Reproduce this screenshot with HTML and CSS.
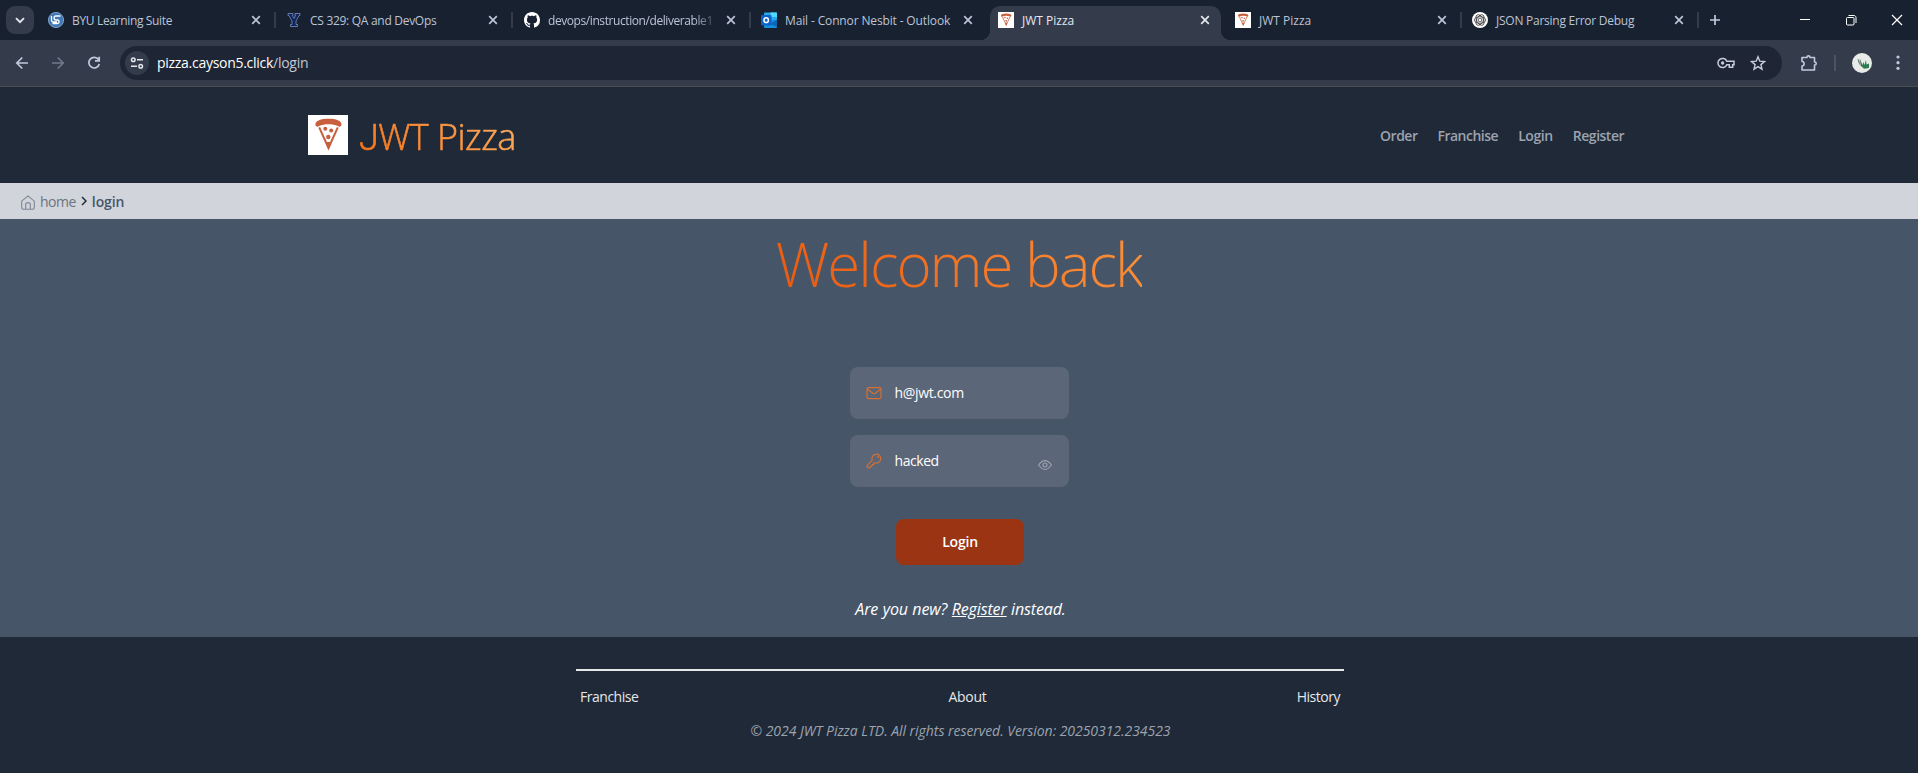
FILE: index.html
```html
<!DOCTYPE html>
<html lang="en">
<head>
<meta charset="utf-8">
<title>JWT Pizza</title>
<link rel="stylesheet" href="styles.css">
</head>
<body>
<svg class="defs" width="0" height="0">
  <symbol id="x" viewBox="0 0 10 10"><path d="M1.2 1.2l7.6 7.6M8.8 1.2L1.2 8.8" fill="none" stroke="currentColor" stroke-width="1.7"/></symbol>
  <symbol id="pizza" viewBox="0 0 40 40"><rect width="40" height="40" fill="#fff"/><path d="M7.4 9.6C7.2 5.600 13 3.700 20.500 3.700S33.700 5.600 33.500 9.600c-.1 2.300-2.200 2.500-3.600 1.500-5-2.600-13.800-2.600-18.900 0-1.500 1-3.500.8-3.600-1.500z" fill="#c8603f"/><path d="M11.200 12.300L20.500 33l9.300-20.700" fill="none" stroke="#c8603f" stroke-width="2"/><path d="M17.500 27h6l-3 8z" fill="#c8603f"/><circle cx="17.300" cy="13.800" r="2" fill="#c8603f"/><circle cx="23.200" cy="15.600" r="2" fill="#c8603f"/><circle cx="20.300" cy="22" r="2.200" fill="#c8603f"/></symbol>
</svg>

<div class="tabstrip">
  <div class="tab-search"><svg width="10" height="7" viewBox="0 0 10 7"><path d="M1 1.200l4 4 4-4" fill="none" stroke="#e3e6ee" stroke-width="1.900"/></svg></div>
  <div class="tab wide">
    <svg class="fav" viewBox="0 0 16 16"><circle cx="8" cy="8" r="7.600" fill="#3f78b5" stroke="#8fb9e0" stroke-width=".8"/><path d="M12.500 4H7.800C5.500 4 5.500 8 7.800 8h1.500c2.500 0 2.500 3.500 0 3.500H4.500M3.500 4v4.500c0 1 .4 1.500 1.500 1.500h4" fill="none" stroke="#fff" stroke-width="1.300"/></svg>
    <span class="label t1">BYU Learning Suite</span><svg class="close"><use href="#x"/></svg><i class="sep"></i>
  </div>
  <div class="tab wide">
    <svg class="fav" viewBox="0 0 16 16"><path d="M2 1.500h5v2H6.300L8 6.500l1.700-3H9v-2h5v2h-1L10 9v3.500h1.500v2h-7v-2H6V9L3 3.500H2z" fill="#0b2560" stroke="#7e8db5" stroke-width=".8"/></svg>
    <span class="label t2">CS 329: QA and DevOps</span><svg class="close"><use href="#x"/></svg><i class="sep"></i>
  </div>
  <div class="tab">
    <svg class="fav" viewBox="0 0 16 16"><path fill="#fff" d="M8 0C3.580 0 0 3.580 0 8c0 3.540 2.290 6.530 5.470 7.590.4.070.55-.17.55-.38 0-.19-.01-.82-.01-1.490-2.010.37-2.530-.49-2.690-.94-.09-.23-.48-.94-.82-1.130-.28-.15-.68-.52-.01-.53.63-.01 1.080.58 1.230.82.72 1.210 1.870.87 2.330.66.070-.52.28-.87.51-1.070-1.780-.2-3.640-.89-3.640-3.950 0-.87.31-1.590.82-2.150-.08-.2-.36-1.020.08-2.120 0 0 .67-.21 2.200.82.640-.18 1.320-.27 2-.27s1.360.09 2 .27c1.530-1.040 2.200-.82 2.200-.82.44 1.100.16 1.920.08 2.120.51.56.82 1.270.82 2.150 0 3.070-1.870 3.750-3.650 3.950.29.25.54.73.54 1.480 0 1.070-.01 1.930-.01 2.200 0 .21.15.46.55.38A8.010 8.010 0 0016 8c0-4.420-3.580-8-8-8z"/></svg>
    <span class="label t3">devops/instruction/deliverable1</span><svg class="close"><use href="#x"/></svg><i class="sep"></i>
  </div>
  <div class="tab">
    <svg class="fav" viewBox="0 0 16 16"><path d="M3 1.500C3 1 3.400.5 4 .5h11c.5 0 1 .4 1 1V9H3z" fill="#28a8ea"/><path d="M9.500.5H15c.5 0 1 .4 1 1V5H9.500z" fill="#50d9ff"/><path d="M3 8h13v7c0 .5-.4 1-1 1H4c-.6 0-1-.5-1-1z" fill="#1490df"/><path d="M9 12l7-4.500V15z" fill="#1066b5"/><rect y="3" width="10.500" height="10.500" rx="1" fill="#0a63c9"/><ellipse cx="5.200" cy="8.200" rx="2.200" ry="2.400" fill="none" stroke="#fff" stroke-width="1.500"/></svg>
    <span class="label t4">Mail - Connor Nesbit - Outlook</span><svg class="close"><use href="#x"/></svg>
  </div>
  <div class="tab active">
    <svg class="fav"><use href="#pizza"/></svg>
    <span class="label t5">JWT Pizza</span><svg class="close"><use href="#x"/></svg>
  </div>
  <div class="tab">
    <svg class="fav"><use href="#pizza"/></svg>
    <span class="label t5">JWT Pizza</span><svg class="close"><use href="#x"/></svg><i class="sep"></i>
  </div>
  <div class="tab">
    <svg class="fav" viewBox="0 0 16 16"><circle cx="8" cy="8" r="8" fill="#fff"/><g fill="none" stroke="#222" stroke-width=".7"><ellipse cx="8" cy="8" rx="5.800" ry="3.300"/><ellipse cx="8" cy="8" rx="5.800" ry="3.300" transform="rotate(60 8 8)"/><ellipse cx="8" cy="8" rx="5.800" ry="3.300" transform="rotate(120 8 8)"/><circle cx="8" cy="8" r="1.800"/></g></svg>
    <span class="label t6">JSON Parsing Error Debug</span><svg class="close"><use href="#x"/></svg><i class="sep"></i>
  </div>
  <svg class="plus" width="12" height="12" viewBox="0 0 12 12"><path d="M6 1v10M1 6h10" stroke="#c3c9dc" stroke-width="1.700"/></svg>
  <div class="window-controls">
    <svg width="12" height="12" viewBox="0 0 12 12"><path d="M1 5.500h10" stroke="#fff"/></svg>
    <svg width="12" height="12" viewBox="0 0 12 12"><g fill="none" stroke="#fff"><rect x="1.500" y="3.500" width="7.500" height="7.500" rx="1"/><path d="M3.500 1.500H9c1 0 2 1 2 2V9"/></g></svg>
    <svg width="12" height="12" viewBox="0 0 12 12"><path d="M1 1l10 10M11 1L1 11" stroke="#fff" stroke-width="1.200"/></svg>
  </div>
</div>

<div class="toolbar">
  <div class="nav-icons">
    <svg width="14" height="14" viewBox="0 0 14 14"><path d="M13 7H2M7.300 1.500L1.800 7l5.500 5.500" fill="none" stroke="#c3c9dc" stroke-width="1.700"/></svg>
    <svg width="14" height="14" viewBox="0 0 14 14"><path d="M1 7h11M6.700 1.500L12.200 7l-5.500 5.500" fill="none" stroke="#717889" stroke-width="1.700"/></svg>
    <svg width="14" height="14" viewBox="0 0 14 14"><path d="M11.500 3.600A5.300 5.300 0 1 0 12.300 8M12.200.8v4H8" fill="none" stroke="#c3c9dc" stroke-width="1.700"/></svg>
  </div>
  <div class="omnibox">
    <div class="site-info"><svg width="14" height="12" viewBox="0 0 14 12"><g fill="none" stroke="#e3e6ee" stroke-width="1.500"><circle cx="3.300" cy="2.700" r="1.800"/><path d="M7 2.700h6M1 9.300h6"/><circle cx="10.700" cy="9.300" r="1.800"/></g></svg></div>
    <span class="url"><b>pizza.cayson5.click</b>/login</span>
    <svg class="key" width="18" height="12" viewBox="0 0 18 12"><path d="M9.800 4.200A4.600 4.600 0 1 0 9.800 7.800h2.500v2.500h3.400V7.800H17V4.200z" fill="none" stroke="#c9ccd6" stroke-width="1.500"/><circle cx="5.600" cy="6" r="1.700" fill="#c9ccd6"/></svg>
    <svg width="16" height="16" viewBox="0 0 16 16"><path d="M8 1.800l1.800 4.400 4.700.4-3.600 3 1.100 4.600L8 11.700l-4 2.500 1.100-4.600-3.600-3 4.700-.4z" fill="none" stroke="#c9ccd6" stroke-width="1.400"/></svg>
  </div>
  <svg class="puzzle" width="18" height="18" viewBox="0 0 18 18"><path d="M2 3.500h5C7 1.300 10 1.300 10 3.500h4.500V8c2.300 0 2.300 3 0 3v5H2v-4c2.800 0 2.800-4.500 0-4.500z" fill="none" stroke="#c3c9dc" stroke-width="1.600" stroke-linejoin="round"/></svg>
  <i class="bar"></i>
  <svg class="avatar" width="20" height="20" viewBox="0 0 20 20"><circle cx="10" cy="10" r="10" fill="#e9ebe8"/><path d="M8.500 9l2 3 .8-3 1.200 3 1.500-5 .5 4.500 2.500-1V15l-5 .8-3-3z" fill="#2c7a52"/><path d="M6 6l1.500 5 3 3M8 6.500l1.500 5M6 8l3.500 2.500" stroke="#4c6c60" stroke-width=".8" fill="none"/></svg>
  <svg class="dots" width="4" height="16" viewBox="0 0 4 16"><g fill="#c3c9dc"><circle cx="2" cy="2" r="1.600"/><circle cx="2" cy="7.700" r="1.600"/><circle cx="2" cy="13.300" r="1.600"/></g></svg>
</div>

<header class="site-header">
  <svg class="logo" width="40" height="40"><use href="#pizza"/></svg>
  <span class="brand"><span class="cap">J</span>WT Pizza</span>
  <nav class="menu"><a class="m1">Order</a><a class="m2">Franchise</a><a class="m3">Login</a><a class="m4">Register</a></nav>
</header>

<div class="crumbs">
  <svg class="house" width="14" height="15" viewBox="0 0 14 15"><path d="M.7 6.200L7 .9l6.300 5.300v6.300c0 1-.7 1.700-1.700 1.700H2.400c-1 0-1.700-.7-1.700-1.700zM4.700 14V9c0-.7.4-1.100 1.100-1.100h2.400c.7 0 1.100.4 1.100 1.100v5" fill="none" stroke="#7f8593" stroke-width="1.100"/></svg>
  <span class="home">home</span>
  <svg class="chev" width="6" height="10" viewBox="0 0 6 10"><path d="M1 1l4 4-4 4" fill="none" stroke="#1f2937" stroke-width="1.500"/></svg>
  <b class="here">login</b>
</div>

<main class="main">
  <h1 class="welcome">Welcome back</h1>
  <div class="field">
    <svg width="16" height="16" viewBox="0 0 16 16"><rect x="1" y="2.600" width="14" height="11" rx="1.500" fill="none" stroke="#d9702f" stroke-width="1.100"/><path d="M1.300 4l5.400 4.200c.8.600 1.800.6 2.600 0L14.700 4" fill="none" stroke="#d9702f" stroke-width="1.100"/></svg>
    <span class="v1">h@jwt.com</span>
  </div>
  <div class="field">
    <svg width="16" height="16" viewBox="0 0 16 16"><path d="M6.300 7.200A4.400 4.400 0 1 1 9 9.700L7.800 10v1.500l-1.600.1-.2 1.600-1.500.2-.8 1.200c-1.300.9-3.300-.5-2.500-2.200zM10.800 3.200c1.200.2 1.900.9 2.100 2" fill="none" stroke="#d9702f" stroke-width="1.100" stroke-linejoin="round"/></svg>
    <span class="v2">hacked</span>
    <svg class="eye" width="14" height="10" viewBox="0 0 14 10"><path d="M.6 5C3 1.700 5 .6 7 .6S11 1.700 13.400 5C11 8.300 9 9.400 7 9.400S3 8.300.6 5z" fill="none" stroke="#9da3ae" stroke-width="1.100"/><circle cx="7" cy="5" r="2" fill="none" stroke="#9da3ae" stroke-width="1.200"/></svg>
  </div>
  <button class="login">Login</button>
  <p class="new">Are you new? <u>Register</u> instead.</p>
</main>

<footer class="footer">
  <div class="links"><a class="f1">Franchise</a><a class="f2">About</a><a class="f3">History</a></div>
  <p class="copy">© 2024 JWT Pizza LTD. All rights reserved. Version: 20250312.234523</p>
</footer>
</body>
</html>
```
FILE: styles.css
```css
* { box-sizing: border-box; }
body { margin: 0; height: 773px; display: flex; flex-direction: column; overflow: hidden; background: #1f2937; font-family: "Open Sans", "Noto Sans", sans-serif; font-size: 14px; }
svg { display: block; flex: none; }
.defs { position: absolute; }

.tabstrip { height: 40px; flex: none; background: #182130; display: flex; align-items: flex-start; padding-left: 6px; }
.tab-search { width: 28px; height: 28px; margin: 6px 6px 0 0; border-radius: 9px; background: #343c4c; display: flex; align-items: center; justify-content: center; }
.tab { position: relative; width: 237px; flex: none; height: 34px; margin-top: 6px; padding-left: 8px; display: flex; align-items: center; padding-bottom: 6px; color: #bcc4d6; font-size: 12px; }
.wide { width: 238px; }
.fav { width: 16px; height: 16px; margin-right: 8px; }
.label { width: 175px; white-space: nowrap; line-height: 20px; padding-top: 1px; }
.t1 { width: 176px; letter-spacing: -.34px; }
.t2 { letter-spacing: -.29px; }
.t3 { width: 168px; margin-right: 7px; letter-spacing: -.42px; -webkit-mask-image: linear-gradient(90deg, #000 145px, transparent 172px); }
.t4 { letter-spacing: -.14px; }
.t6 { letter-spacing: -.25px; }
.close { width: 10px; height: 10px; margin-left: 3px; }
.sep { width: 2px; height: 16px; margin-left: 13px; background: #343c4c; }
.active { width: 231px; margin-right: 6px; background: #343c4c; border-radius: 10px 10px 0 0; color: #e6e8ee; }
.active::before, .active::after { content: ""; position: absolute; bottom: 0; width: 10px; height: 10px; }
.active::before { left: -10px; background: radial-gradient(circle at 0 0, #182130 10px, #343c4c 10.500px); }
.active::after { right: -10px; background: radial-gradient(circle at 100% 0, #182130 10px, #343c4c 10.500px); }
.plus { margin: 14px 0 0 8px; }
.window-controls { margin: 14px 15px 0 auto; display: flex; gap: 34px; }

.toolbar { height: 47px; flex: none; background: #343c4c; border-bottom: 1px solid #4b4c50; display: flex; align-items: center; padding: 0 18px 0 15px; }
.nav-icons { display: flex; gap: 22px; width: 105px; }
.omnibox { width: 1662px; height: 34px; border-radius: 17px; background: #1e2636; display: flex; align-items: center; padding: 0 16px 0 5px; }
.site-info { width: 24px; height: 24px; border-radius: 12px; background: #343c4c; display: flex; align-items: center; justify-content: center; margin-right: 8px; }
.url { flex: 1; color: #c3c8d4; font-size: 14px; letter-spacing: -.28px; padding-bottom: 1px; }
.url b { font-weight: 400; color: #fff; }
.key { margin-right: 15px; }
.puzzle { margin-left: 18px; }
.bar { width: 2px; height: 16px; background: #4b5364; margin-left: 16px; }
.avatar { margin-left: 16px; }
.dots { margin-left: auto; }

.site-header { height: 96px; flex: none; padding: 0 294px 0 308px; display: flex; align-items: center; }
.brand { margin: 5px 0 0 11px; font-size: 36px; font-weight: 300; line-height: 40px; letter-spacing: -.55px; -webkit-text-stroke: .6px transparent; background: linear-gradient(45deg, #f97316, #fdae62); -webkit-background-clip: text; background-clip: text; color: transparent; }
.cap { font-family: Roboto, sans-serif; font-weight: 300; }
.menu { margin-left: auto; display: flex; gap: 20px; color: #9ca3af; font-weight: 600; letter-spacing: -.5px; }
.m3 { letter-spacing: -.4px; }

.crumbs { height: 36px; flex: none; background: #d1d5db; display: flex; align-items: center; padding-left: 21px; color: #6b7280; }
.house { margin-top: 2px; }
.home { margin-left: 5px; letter-spacing: -.5px; }
.chev { margin: 0 5px; }
.here { font-weight: 600; color: #475569; letter-spacing: -.1px; }

.main { height: 418px; flex: none; background: #475569; display: flex; flex-direction: column; align-items: center; color: #fff; }
.welcome { margin: 15px 0 73px; font-size: 60px; line-height: 60px; font-weight: 300; letter-spacing: -2px; background: linear-gradient(45deg, #ea580c, #fb923c); -webkit-background-clip: text; background-clip: text; color: transparent; }
.field { width: 219px; height: 52px; margin-bottom: 16px; border-radius: 8px; background: #5b6678; display: flex; align-items: center; padding: 0 17px 0 16px; letter-spacing: -.33px; }
.field span { margin: -1px 0 0 13px; }
.v2 { letter-spacing: -.45px; }
.eye { margin: 8px 0 0 auto; }
.login { margin: 16px 0 0 1px; width: 128px; height: 46px; border: 0; border-radius: 8px; background: #9a3412; color: #fff; font: 600 14px "Open Sans", sans-serif; letter-spacing: -.2px; padding: 0 6px 1px 7px; }
.new { margin: 32px 0 0 3px; font-size: 16px; line-height: 24px; font-style: italic; letter-spacing: -.14px; word-spacing: .5px; }

.footer { flex: 1; display: flex; flex-direction: column; align-items: center; padding: 32px 0 0 2px; }
.links { width: 768px; border-top: 2px solid #e5e7eb; padding: 16px 4px 0; display: flex; justify-content: space-between; color: #e5e7eb; line-height: 20px; letter-spacing: -.48px; }
.f2 { letter-spacing: -.3px; }
.copy { margin: 14px 0 0 1px; font-style: italic; color: #9ca3af; line-height: 20px; letter-spacing: -.045px; }
```
